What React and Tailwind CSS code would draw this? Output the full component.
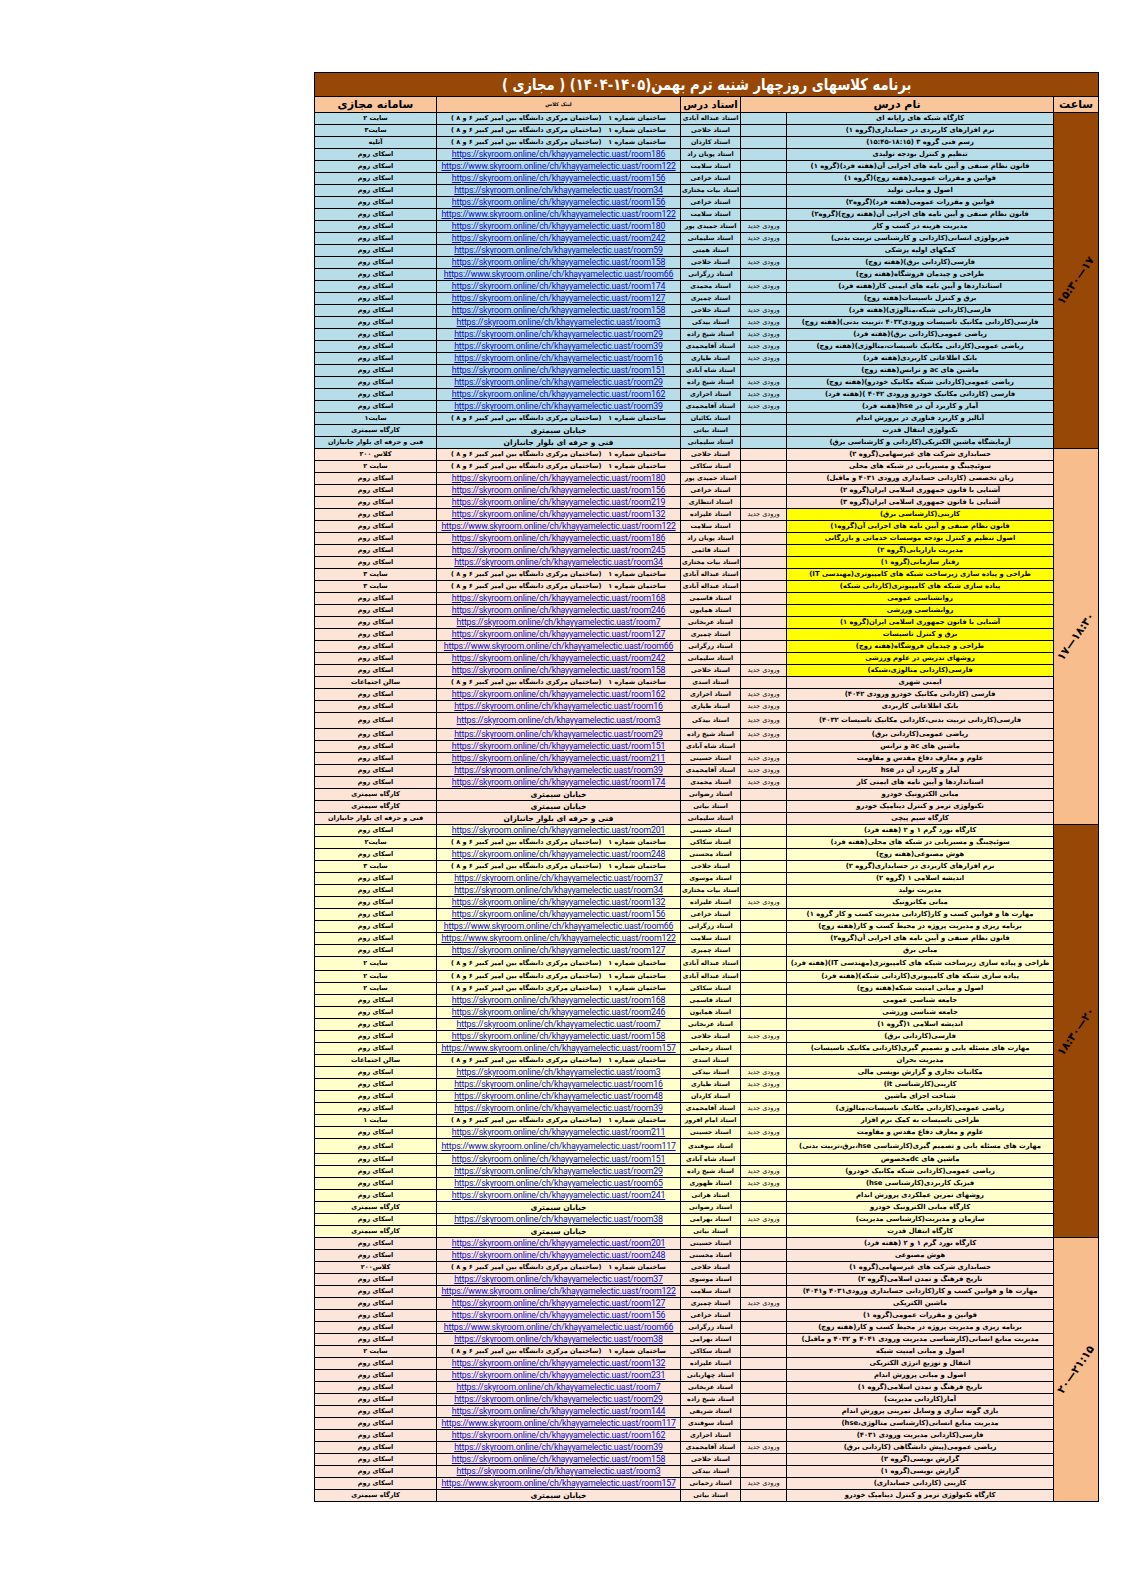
import React from "react";

const B = "ساختمان شماره ۱   (ساختمان مرکزی دانشگاه بین امیر کبیر ۶ و ۸ )";
const S = "خیابان سیمتری";
const F = "فنی و حرفه ای بلوار جانبازان";
const SKY = "اسکای روم";

// [course, teacher, new, location, system, yellow, extra height]
const sections = [
  {
    time: "۱۵:۳۰—۱۷",
    row: "bg-[#b7dde8]",
    side: "bg-[#974706]",
    rows: [
      ["کارگاه شبکه های رایانه ای", "استاد عبداله آبادی", 0, "B", "سایت ۲"],
      ["نرم افزارهای کاربردی در حسابداری(گروه ۱)", "استاد حلاجی", 0, "B", "سایت۳"],
      ["رسم فنی گروه ۳ (۱۸:۱۵-۱۵:۴۵)", "استاد کاردان", 0, "B", "آتلیه"],
      ["تنظیم و کنترل بودجه تولیدی", "استاد پویان راد", 0, "s186"],
      ["قانون نظام صنفی و آیین نامه های اجرایی آن(هفته فرد)(گروه ۱)", "استاد سلامت", 0, "w122"],
      ["قوانین و مقررات عمومی(هفته زوج)(گروه ۱)", "استاد خزاعی", 0, "s156"],
      ["اصول و مبانی تولید", "استاد بیات مختاری", 0, "s34"],
      ["قوانین و مقررات عمومی(هفته فرد)(گروه۲)", "استاد خزاعی", 0, "s156"],
      ["قانون نظام صنفی و آیین نامه های اجرایی آن(هفته زوج)(گروه۲)", "استاد سلامت", 0, "w122"],
      ["مدیریت هزینه در کسب و کار", "استاد حمیدی پور", 1, "s180"],
      ["فیزیولوژی انسانی(کاردانی و کارشناسی تربیت بدنی)", "استاد سلیمانی", 1, "s242"],
      ["کمکهای اولیه پزشکی", "استاد همتی", 0, "s59"],
      ["فارسی(کاردانی برق)(هفته زوج)", "استاد حلاجی", 1, "s158"],
      ["طراحی و چیدمان فروشگاه(هفته زوج)", "استاد زرگرانی", 0, "w66"],
      ["استانداردها و آیین نامه های ایمنی کار(هفته فرد)", "استاد محمدی", 1, "s174"],
      ["برق و کنترل تاسیسات(هفته زوج)", "استاد چمیری", 0, "s127"],
      ["فارسی(کاردانی شبکه،متالوژی)(هفته فرد)", "استاد حلاجی", 1, "s158"],
      ["فارسی(کاردانی مکانیک تاسیسات ورودی۴۰۳۲ ،تربیت بدنی)(هفته زوج)", "استاد بیدکی", 1, "s3"],
      ["ریاضی عمومی(کاردانی برق)(هفته فرد)", "استاد شیخ زاده", 1, "s29"],
      ["ریاضی عمومی(کاردانی مکانیک تاسیسات،متالوژی)(هفته زوج)", "استاد آقامحمدی", 1, "s39"],
      ["بانک اطلاعاتی کاربردی(هفته فرد)", "استاد طیاری", 1, "s16"],
      ["ماشین های ac و ترانس(هفته زوج)", "استاد شاه آبادی", 0, "s151"],
      ["ریاضی عمومی(کاردانی شبکه مکانیک خودرو)(هفته زوج)", "استاد شیخ زاده", 1, "s29"],
      ["فارسی (کاردانی مکانیک خودرو ورودی ۴۰۴۲ )(هفته فرد)", "استاد احرازی", 1, "s162"],
      ["آمار و کاربرد آن در hse(هفته فرد)", "استاد آقامحمدی", 1, "s39"],
      ["آنالیز و کاربرد فناوری در پرورش اندام", "استاد بکائیان", 0, "B", "سایت۱"],
      ["تکنولوژی انتقال قدرت", "استاد بیاتی", 0, "S", "کارگاه سیمتری"],
      ["آزمایشگاه ماشین الکتریکی(کاردانی و کارشناسی برق)", "استاد سلیمانی", 0, "F", F],
    ],
  },
  {
    time: "۱۷—۱۸:۳۰",
    row: "bg-[#fce4d6]",
    side: "bg-[#f8bd8c]",
    rows: [
      ["حسابداری شرکت های غیرسهامی(گروه ۲)", "استاد حلاجی", 0, "B", "کلاس ۲۰۰"],
      ["سوئیچینگ و مسیریابی در شبکه های محلی", "استاد سکاکی", 0, "B", "سایت ۲"],
      ["زبان تخصصی (کاردانی حسابداری ورودی ۴۰۳۱ و ماقبل)", "استاد حمیدی پور", 0, "s180"],
      ["آشنایی با قانون جمهوری اسلامی ایران(گروه ۲)", "استاد خزاعی", 0, "s156"],
      ["آشنایی با قانون جمهوری اسلامی ایران(گروه ۳)", "استاد انتظاری", 0, "s219"],
      ["کارینی(کارشناسی برق)", "استاد علیزاده", 1, "s132", SKY, 1],
      ["قانون نظام صنفی و آیین نامه های اجرایی آن(گروه۱)", "استاد سلامت", 0, "w122", SKY, 1],
      ["اصول تنظیم و کنترل بودجه موسسات خدماتی و بازرگانی", "استاد پویان راد", 0, "s186", SKY, 1],
      ["مدیریت بازاریابی(گروه ۲)", "استاد قائمی", 0, "s245", SKY, 1],
      ["رفتار سازمانی(گروه ۱)", "استاد بیات مختاری", 0, "s34", SKY, 1],
      ["طراحی و پیاده سازی زیرساخت شبکه های کامپیوتری(مهندسی IT)", "استاد عبداله آبادی", 0, "B", "سایت ۳", 1],
      ["پیاده سازی شبکه های کامپیوتری(کاردانی شبکه)", "استاد عبداله آبادی", 0, "B", "سایت ۳", 1],
      ["روانشناسی عمومی", "استاد قاسمی", 0, "s168", SKY, 1],
      ["روانشناسی ورزشی", "استاد همایون", 0, "s246", SKY, 1],
      ["آشنایی با قانون جمهوری اسلامی ایران(گروه ۱)", "استاد عربخانی", 0, "s7", SKY, 1],
      ["برق و کنترل تاسیسات", "استاد چمیری", 0, "s127", SKY, 1],
      ["طراحی و چیدمان فروشگاه(هفته زوج)", "استاد زرگرانی", 0, "w66", SKY, 1],
      ["روشهای تدریس در علوم ورزشی", "استاد سلیمانی", 0, "s242", SKY, 1],
      ["فارسی(کاردانی متالوژی،شبکه)", "استاد حلاجی", 1, "s158", SKY, 1],
      ["ایمنی شهری", "استاد اسدی", 0, "B", "سالن اجتماعات"],
      ["فارسی (کاردانی مکانیک خودرو ورودی ۴۰۴۲)", "استاد احرازی", 1, "s162"],
      ["بانک اطلاعاتی کاربردی", "استاد طیاری", 1, "s16"],
      ["فارسی(کاردانی تربیت بدنی،کاردانی مکانیک تاسیسات ۴۰۳۲)", "استاد بیدکی", 1, "s3", SKY, 0, 4],
      ["ریاضی عمومی(کاردانی برق)", "استاد شیخ زاده", 1, "s29"],
      ["ماشین های ac و ترانس", "استاد شاه آبادی", 0, "s151"],
      ["علوم و معارف دفاع مقدس و مقاومت", "استاد حسینی", 1, "s211"],
      ["آمار و کاربرد آن در hse", "استاد آقامحمدی", 1, "s39"],
      ["استانداردها و آیین نامه های ایمنی کار", "استاد محمدی", 1, "s174"],
      ["مبانی الکترونیک خودرو", "استاد رضوانی", 0, "S", "کارگاه سیمتری"],
      ["تکنولوژی ترمز و کنترل دینامیک خودرو", "استاد بیاتی", 0, "S", "کارگاه سیمتری"],
      ["کارگاه سیم پیچی", "استاد سلیمانی", 0, "F", F],
    ],
  },
  {
    time: "۱۸:۳۰—۲۰",
    row: "bg-[#ffffcc]",
    side: "bg-[#974706]",
    rows: [
      ["کارگاه نورد گرم ۱ و ۲ (هفته فرد)", "استاد حسینی", 0, "s201"],
      ["سوئیچینگ و مسیریابی در شبکه های محلی(هفته فرد)", "استاد سکاکی", 0, "B", "سایت۲"],
      ["هوش مصنوعی(هفته زوج)", "استاد محسنی", 0, "s248"],
      ["نرم افزارهای کاربردی در حسابداری(گروه ۲)", "استاد حلاجی", 0, "B", "سایت ۳"],
      ["اندیشه اسلامی ۱ (گروه ۲)", "استاد موسوی", 0, "s37"],
      ["مدیریت تولید", "استاد بیات مختاری", 0, "s34"],
      ["مبانی مکاترونیک", "استاد علیزاده", 1, "s132"],
      ["مهارت ها و قوانین کسب و کار(کاردانی مدیریت کسب و کار گروه ۱)", "استاد خزاعی", 0, "s156"],
      ["برنامه ریزی و مدیریت پروژه در محیط کسب و کار(هفته زوج)", "استاد زرگرانی", 0, "w66"],
      ["قانون نظام صنفی و آیین نامه های اجرایی آن(گروه۲)", "استاد سلامت", 0, "w122"],
      ["مبانی برق", "استاد چمیری", 0, "s127"],
      ["طراحی و پیاده سازی زیرساخت شبکه های کامپیوتری(مهندسی IT)(هفته فرد)", "استاد عبداله آبادی", 0, "B", "سایت ۲", 0, 2],
      ["پیاده سازی شبکه های کامپیوتری(کاردانی شبکه)(هفته فرد)", "استاد عبداله آبادی", 0, "B", "سایت ۲"],
      ["اصول و مبانی امنیت شبکه(هفته زوج)", "استاد سکاکی", 0, "B", "سایت ۲"],
      ["جامعه شناسی عمومی", "استاد قاسمی", 0, "s168"],
      ["جامعه شناسی ورزشی", "استاد همایون", 0, "s246"],
      ["اندیشه اسلامی ۱(گروه ۱)", "استاد عربخانی", 0, "s7"],
      ["فارسی(کاردانی برق)", "استاد حلاجی", 1, "s158"],
      ["مهارت های مسئله یابی و تصمیم گیری(کاردانی مکانیک تاسیسات)", "استاد رحمانی", 0, "w157"],
      ["مدیریت بحران", "استاد اسدی", 0, "B", "سالن اجتماعات"],
      ["مکاتبات تجاری و گزارش نویسی مالی", "استاد بیدکی", 1, "s3"],
      ["کارینی(کارشناسی it)", "استاد طیاری", 1, "s16"],
      ["شناخت اجزای ماشین", "استاد کاردان", 0, "s48"],
      ["ریاضی عمومی(کاردانی مکانیک تاسیسات،متالوژی)", "استاد آقامحمدی", 1, "s39"],
      ["طراحی تاسیسات به کمک نرم افزار", "استاد امام افروز", 0, "B", "سایت ۱"],
      ["علوم و معارف دفاع مقدس و مقاومت", "استاد حسینی", 1, "s211"],
      ["مهارت های مسئله یابی و تصمیم گیری(کارشناسی hse،برق،تربیت بدنی)", "استاد سوقندی", 0, "w117", SKY, 0, 3],
      ["ماشین های dcمخصوص", "استاد شاه آبادی", 0, "s151"],
      ["ریاضی عمومی(کاردانی شبکه مکانیک خودرو)", "استاد شیخ زاده", 1, "s29"],
      ["فیزیک کاربردی(کارشناسی hse)", "استاد ظهوری", 1, "s65"],
      ["روشهای تمرین عملکردی پرورش اندام", "استاد هراتی", 0, "s241"],
      ["کارگاه مبانی الکترونیک خودرو", "استاد رضوانی", 0, "S", "کارگاه سیمتری"],
      ["سازمان و مدیریت(کارشناسی مدیریت)", "استاد بهرامی", 1, "s38"],
      ["کارگاه انتقال قدرت", "استاد بیاتی", 0, "S", "کارگاه سیمتری"],
    ],
  },
  {
    time: "۲۰—۲۱:۱۵",
    row: "bg-[#fce6dc]",
    side: "bg-[#f8bd8c]",
    rows: [
      ["کارگاه نورد گرم ۱ و ۲ (هفته فرد)", "استاد حسینی", 0, "s201"],
      ["هوش مصنوعی", "استاد محسنی", 0, "s248"],
      ["حسابداری شرکت های غیرسهامی(گروه ۱)", "استاد حلاجی", 0, "B", "کلاس۲۰۰"],
      ["تاریخ فرهنگ و تمدن اسلامی(گروه ۲)", "استاد موسوی", 0, "s37"],
      ["مهارت ها و قوانین کسب و کار(کاردانی حسابداری ورودی۴۰۳۱ و۴۰۴۱)", "استاد سلامت", 0, "w122"],
      ["ماشین الکتریکی", "استاد چمیری", 1, "s127"],
      ["قوانین و مقررات عمومی(گروه ۱)", "استاد خزاعی", 0, "s156"],
      ["برنامه ریزی و مدیریت پروژه در محیط کسب و کار(هفته زوج)", "استاد زرگرانی", 0, "w66"],
      ["مدیریت منابع انسانی(کارشناسی مدیریت ورودی ۴۰۴۱ و ۴۰۳۲ و ماقبل)", "استاد بهرامی", 0, "s38"],
      ["اصول و مبانی امنیت شبکه", "استاد سکاکی", 0, "B", "سایت ۲"],
      ["انتقال و توزیع انرژی الکتریکی", "استاد علیزاده", 0, "s132"],
      ["اصول و مبانی پرورش اندام", "استاد چهاربانی", 0, "s231"],
      ["تاریخ فرهنگ و تمدن اسلامی(گروه ۱)", "استاد عربخانی", 0, "s7"],
      ["آمار(کاردانی مدیریت)", "استاد شیخ زاده", 0, "s29"],
      ["بازی گونه سازی و وسایل تمرینی پرورش اندام", "استاد شریفی", 0, "s144"],
      ["مدیریت منابع انسانی(کارشناسی متالوژی،hse)", "استاد سوقندی", 0, "w117"],
      ["فارسی(کاردانی مدیریت ورودی ۴۰۳۱)", "استاد احرازی", 0, "s162"],
      ["ریاضی عمومی(پیش دانشگاهی (کاردانی برق)", "استاد آقامحمدی", 1, "s39"],
      ["گزارش نویسی(گروه ۲)", "استاد حلاجی", 0, "s158"],
      ["گزارش نویسی(گروه ۱)", "استاد بیدکی", 0, "s3"],
      ["کارینی (کاردانی حسابداری)", "استاد رحمانی", 1, "w157"],
      ["کارگاه تکنولوژی ترمز و کنترل دینامیک خودرو", "استاد بیاتی", 0, "S", "کارگاه سیمتری"],
    ],
  },
];

const heights = { 0: "h-[11px]", 2: "h-[13px]", 3: "h-[14px]", 4: "h-[15px]" };
const fa = "font-['DejaVu_Sans',sans-serif]";
const td = "border border-black p-0 align-middle text-[6px] leading-none";
const box = "flex items-center justify-center overflow-hidden whitespace-nowrap leading-none";

function Location({ loc }) {
  if (loc === "B" || loc === "S" || loc === "F") {
    const text = loc === "B" ? B : loc === "S" ? S : F;
    const size = loc === "B" ? "text-[6.5px]" : "text-[7.5px]";
    return <span className={`${fa} ${size} font-bold whitespace-pre`}>{text}</span>;
  }
  const host = loc[0] === "w" ? "https://www.skyroom.online" : "https://skyroom.online";
  return (
    <span dir="ltr" className="font-['Roboto',sans-serif] text-[8.8px] tracking-[-0.2px] text-[#0c0cc4] underline">
      {`${host}/ch/khayyamelectic.uast/room${loc.slice(1)}`}
    </span>
  );
}

export default function App() {
  return (
    <div className="bg-white min-h-[1587px] w-[1122px] pt-[72px] pl-[314px]">
      <table dir="rtl" className="table-fixed border-collapse w-[784px] text-black">
        <colgroup>
          <col className="w-[45px]" />
          <col className="w-[267px]" />
          <col className="w-[46px]" />
          <col className="w-[60px]" />
          <col className="w-[244px]" />
          <col className="w-[122px]" />
        </colgroup>
        <thead>
          <tr>
            <th colSpan={6} className={`border border-black p-0 bg-[#974706] text-white ${fa} text-[16px] font-bold leading-none`}>
              <div className="h-[23px] flex items-center justify-center">
                <span className="inline-block scale-x-[0.82] whitespace-nowrap">
                  برنامه کلاسهای روزچهار شنبه ترم بهمن(۱۴۰۵-۱۴۰۴) ( مجازی )
                </span>
              </div>
            </th>
          </tr>
          <tr className={`bg-[#f9c59b] ${fa} font-bold`}>
            <th className="border border-black p-0 text-[11px] leading-none">
              <div className="h-[15px] flex items-center justify-center">ساعت</div>
            </th>
            <th colSpan={2} className="border border-black p-0 text-[11px] leading-none">نام درس</th>
            <th className="border border-black p-0 text-[10px] leading-none">استاد درس</th>
            <th className="border border-black p-0 text-[5px] leading-none">لینک کلاس</th>
            <th className="border border-black p-0 text-[11px] leading-none">سامانه مجازی</th>
          </tr>
        </thead>
        <tbody>
          {sections.map((sec) =>
            sec.rows.map((r, i) => {
              const [course, teacher, isNew, loc, sys, yellow, extra] = r;
              const h = heights[extra || 0];
              return (
                <tr key={sec.time + i} className={sec.row}>
                  {i === 0 && (
                    <td rowSpan={sec.rows.length} className={`${td} ${sec.side}`}>
                      <div className="flex justify-center">
                        <span dir="ltr" className={`shrink-0 -rotate-[55deg] ${fa} text-[11px] font-bold whitespace-nowrap`}>
                          {sec.time}
                        </span>
                      </div>
                    </td>
                  )}
                  <td className={`${td} ${yellow ? "bg-[#ffff00]" : ""}`}>
                    <div className={`${box} ${h} ${fa} text-[6.8px] font-bold`}>{course}</div>
                  </td>
                  <td className={td}>
                    <div className={`${box} ${h} ${fa} text-[6.5px]`}>{isNew ? "ورودی جدید" : ""}</div>
                  </td>
                  <td className={td}>
                    <div className={`${box} ${h} ${fa} text-[6.3px] font-bold`}>{teacher}</div>
                  </td>
                  <td className={td}>
                    <div className={`${box} ${h}`}>
                      <Location loc={loc} />
                    </div>
                  </td>
                  <td className={td}>
                    <div className={`${box} ${h} ${fa} text-[6.5px] font-bold`}>{sys || SKY}</div>
                  </td>
                </tr>
              );
            })
          )}
        </tbody>
      </table>
    </div>
  );
}
